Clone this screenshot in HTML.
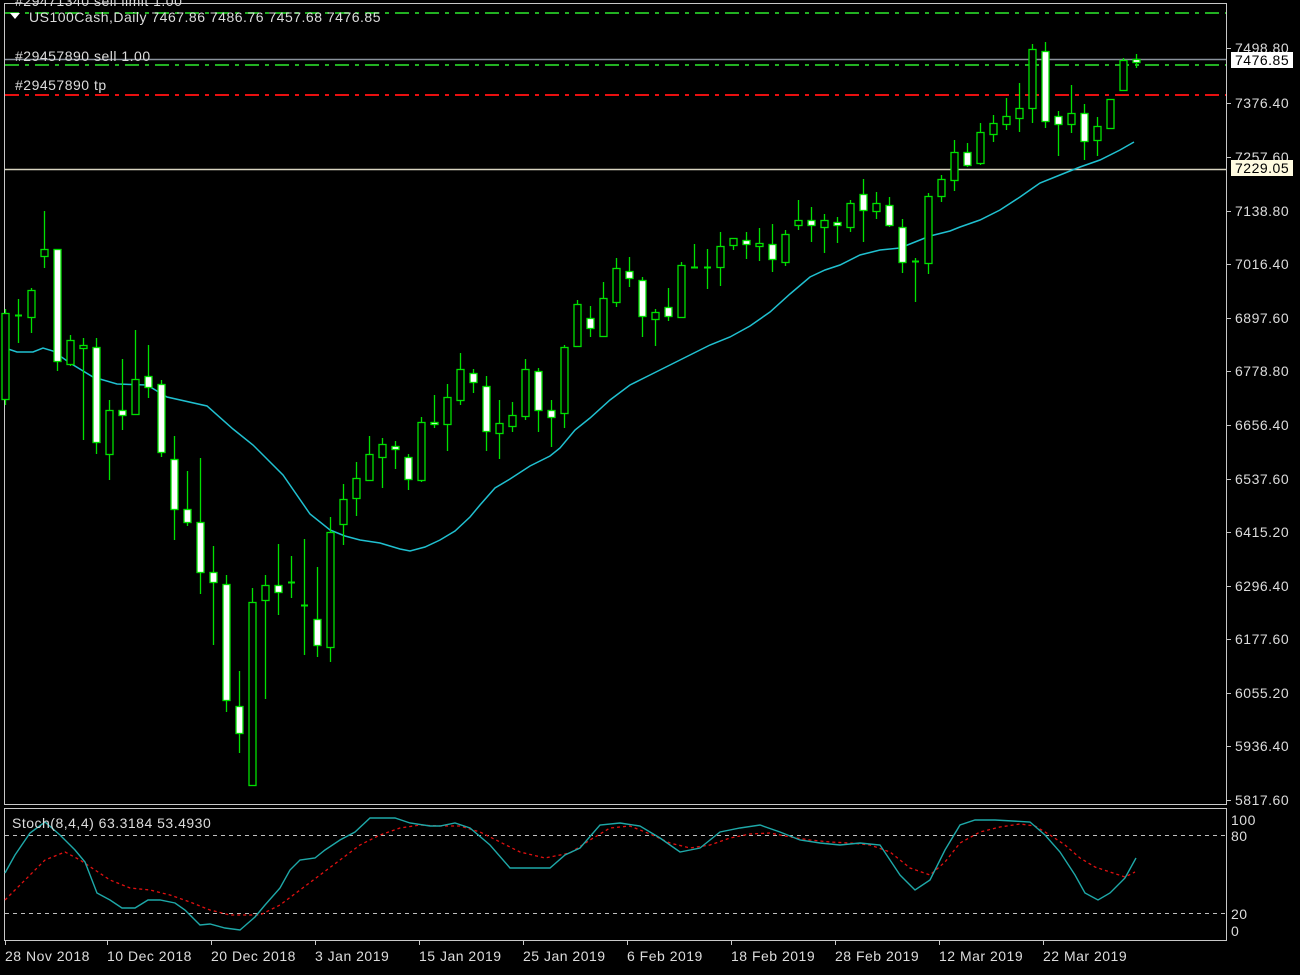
<!DOCTYPE html>
<html><head><meta charset="utf-8">
<style>
html,body{margin:0;padding:0;background:#000;width:1300px;height:975px;overflow:hidden}
svg{display:block}
text{font-family:"Liberation Sans",sans-serif;font-size:14px;letter-spacing:0.5px;fill:#dcdcdc}
</style></head><body>
<svg id="s" width="1300" height="975" viewBox="0 0 1300 975" xmlns="http://www.w3.org/2000/svg">
<rect width="1300" height="975" fill="#000"/>
<rect x="4.5" y="3.5" width="1222" height="801" fill="none" stroke="#c8c8c8" stroke-width="1"/>
<rect x="4.5" y="808.5" width="1222" height="132" fill="none" stroke="#c8c8c8" stroke-width="1"/>
<line x1="5" y1="13" x2="1226" y2="13" stroke="#22b022" stroke-width="2" stroke-dasharray="14,6,4,6"/>
<line x1="5" y1="59.5" x2="1226" y2="59.5" stroke="#8a929c" stroke-width="1.5"/>
<line x1="5" y1="65" x2="1226" y2="65" stroke="#22b022" stroke-width="2" stroke-dasharray="14,6,4,6"/>
<line x1="5" y1="95" x2="1226" y2="95" stroke="#e81010" stroke-width="2" stroke-dasharray="14,6,4,6"/>
<line x1="5" y1="169.5" x2="1226" y2="169.5" stroke="#d8d4c0" stroke-width="1.5"/>
<g id="ma"></g>
<g id="candles"></g>
<text x="15" y="6">#29471340 sell limit 1.00</text>
<polygon points="10,13 20,13 15,19" fill="#fff"/>
<text x="29" y="22">US100Cash,Daily  7467.86 7486.76 7457.68 7476.85</text>
<text x="15" y="61">#29457890 sell 1.00</text>
<text x="15" y="90">#29457890 tp</text>
<g id="axis"></g>
<rect x="1231" y="52" width="62" height="16" fill="#fff"/>
<text x="1235" y="65" style="fill:#000">7476.85</text>
<rect x="1231" y="160" width="62" height="16" fill="#fffbe0"/>
<text x="1235" y="173" style="fill:#000">7229.05</text>
<line x1="5" y1="835.5" x2="1226" y2="835.5" stroke="#c0c0c0" stroke-dasharray="4,4"/>
<line x1="5" y1="913.5" x2="1226" y2="913.5" stroke="#c0c0c0" stroke-dasharray="4,4"/>
<polyline id="sig" fill="none" stroke="#e01010" stroke-dasharray="3,3" stroke-width="1.3"/>
<polyline id="stm" fill="none" stroke="#1ea8a8" stroke-width="1.4"/>
<text x="12" y="828">Stoch(8,4,4) 63.3184 53.4930</text>
<text x="1231" y="825">100</text>
<text x="1231" y="841">80</text>
<text x="1231" y="919">20</text>
<text x="1231" y="936">0</text>
<g id="dates"></g>
</svg>
<script>
var NS="http://www.w3.org/2000/svg";
function el(p,n,a){var e=document.createElementNS(NS,n);for(var k in a)e.setAttribute(k,a[k]);p.appendChild(e);return e;}
var C=[[309,313,399,405,'B'],[299,315,315,343,'D'],[288,290,317,333,'B'],[211,249,256,268,'B'],[249,249,361,371,'R'],
[335,340,364,366,'B'],[338,345,348,440,'B'],[338,347,442,454,'R'],[400,410,454,480,'B'],[359,410,415,430,'R'],
[330,379,414,415,'B'],[345,376,387,398,'R'],[380,384,452,457,'R'],[436,459,509,540,'R'],[471,509,522,526,'R'],
[458,522,572,594,'R'],[546,572,582,645,'R'],[575,584,700,712,'R'],[671,706,733,753,'R'],[588,602,785,785,'B'],
[575,585,600,699,'B'],[544,585,592,615,'R'],[556,582,582,598,'D'],[539,605,605,655,'D'],[567,619,645,657,'R'],
[517,532,647,662,'B'],[484,499,524,545,'B'],[462,478,498,516,'B'],[436,454,480,480,'B'],[438,444,457,488,'B'],
[441,446,449,469,'R'],[454,457,479,490,'R'],[417,422,480,482,'B'],[395,422,424,428,'R'],[384,397,424,451,'B'],
[353,369,400,405,'B'],[369,373,382,393,'R'],[376,386,431,451,'R'],[400,423,433,459,'B'],[402,415,426,432,'B'],
[359,369,416,420,'B'],[368,371,410,432,'R'],[400,410,417,447,'R'],[345,347,413,428,'B'],[300,304,346,347,'B'],
[306,318,328,337,'R'],[282,298,336,337,'B'],[258,268,302,307,'B'],[257,271,278,287,'R'],[277,280,316,337,'R'],
[309,312,319,346,'B'],[288,307,316,321,'R'],[262,265,317,318,'B'],[244,267,267,268,'D'],[249,267,267,289,'D'],
[232,246,267,286,'B'],[238,238,245,250,'B'],[232,240,244,259,'R'],[228,243,246,261,'B'],[224,244,259,272,'R'],
[230,234,262,266,'B'],[200,220,225,230,'B'],[207,220,225,242,'R'],[214,220,227,253,'B'],[217,222,225,243,'R'],
[200,203,227,232,'B'],[179,194,210,242,'R'],[192,203,211,219,'B'],[197,205,225,227,'R'],[219,227,262,273,'R'],
[258,261,261,302,'D'],[193,196,263,274,'B'],[175,179,196,202,'B'],[140,152,180,191,'B'],[143,152,165,167,'R'],
[123,132,163,165,'B'],[115,123,134,142,'B'],[98,116,124,130,'B'],[83,108,118,132,'B'],[44,49,108,123,'B'],
[42,51,121,128,'R'],[111,116,124,156,'R'],[85,113,124,133,'B'],[104,113,141,160,'R'],[117,126,140,156,'B'],
[99,99,128,128,'B'],[58,60,90,90,'B'],[54,59,62,68,'R']];
var g=document.getElementById('candles'),G='#00e000';
C.forEach(function(c,i){var x=5+13*i;
 el(g,'line',{x1:x+0.5,x2:x+0.5,y1:c[0],y2:c[3],stroke:G,'stroke-width':1.3});
 if(c[4]=='D'){el(g,'line',{x1:x-3,x2:x+4,y1:c[1]+0.5,y2:c[1]+0.5,stroke:G,'stroke-width':2});}
 else el(g,'rect',{x:x-3,y:c[1]+0.5,width:7,height:Math.max(2,c[2]-c[1]),fill:c[4]=='R'?'#fff':'#000',stroke:G,'stroke-width':1.3});
});
var ma="5,348 17,352 33,352 43,348 53,351 70,363 93,377 117,384 147,385 167,397 207,406 233,429 253,445 283,475 310,514 330,530 345,536 360,540 380,543 400,549 410,551 425,547 440,540 455,531 470,517 480,505 495,488 510,479 530,466 550,456 560,448 575,430 590,418 610,400 630,385 650,375 670,365 690,355 710,345 730,337 750,326 770,312 790,294 810,277 825,270 840,265 860,255 880,250 900,248 915,242 930,236 950,231 960,227 980,220 1000,210 1020,197 1030,190 1040,183 1060,175 1080,167 1100,160 1120,150 1134,142";
el(document.getElementById('ma'),'polyline',{points:ma,fill:'none',stroke:'#20c0d0','stroke-width':1.5});
var ax=document.getElementById('axis');
[["7498.80",48],["7376.40",103],["7257.60",157],["7138.80",211],["7016.40",264],["6897.60",318],["6778.80",371],["6656.40",425],["6537.60",479],["6415.20",532],["6296.40",586],["6177.60",639],["6055.20",693],["5936.40",746],["5817.60",800]].forEach(function(p){
 el(ax,'line',{x1:1227,x2:1231,y1:p[1]+0.5,y2:p[1]+0.5,stroke:'#c8c8c8'});
 var t=el(ax,'text',{x:1235,y:p[1]+5});t.textContent=p[0];});
document.getElementById('stm').setAttribute('points',"5,873 15,855 30,833 45,822 60,835 75,850 85,862 97,893 110,900 122,908 135,908 148,900 160,900 175,903 185,910 200,925 210,924 225,928 240,930 255,917 265,905 280,888 290,870 300,860 315,858 325,850 340,840 355,832 370,818 395,818 410,823 430,826 440,826 455,823 470,828 490,845 510,868 530,868 550,868 565,855 580,848 600,825 620,823 640,826 660,838 680,852 700,848 720,832 740,828 760,825 780,832 800,840 820,843 840,845 860,843 880,845 900,875 915,890 930,880 945,850 960,825 975,820 995,820 1030,822 1045,835 1060,852 1075,875 1085,893 1098,900 1110,893 1125,878 1136,858");
document.getElementById('sig').setAttribute('points',"5,900 25,880 45,860 65,852 80,860 95,870 110,880 130,888 150,890 170,895 190,902 210,910 230,915 260,915 280,905 300,890 320,875 340,860 360,845 380,835 400,828 420,825 440,826 460,826 480,832 500,842 520,852 545,858 570,853 590,840 610,828 630,826 650,834 670,843 690,848 710,845 730,838 750,834 770,833 790,837 810,840 830,842 850,843 870,845 890,852 910,868 930,875 945,862 960,843 980,832 1000,827 1020,824 1035,826 1050,835 1065,845 1080,858 1095,867 1110,872 1125,877 1135,872");
var d=document.getElementById('dates');
[["28 Nov 2018",5],["10 Dec 2018",107],["20 Dec 2018",211],["3 Jan 2019",315],["15 Jan 2019",419],["25 Jan 2019",523],["6 Feb 2019",627],["18 Feb 2019",731],["28 Feb 2019",835],["12 Mar 2019",939],["22 Mar 2019",1043]].forEach(function(p){
 el(d,'line',{x1:p[1]+0.5,x2:p[1]+0.5,y1:941,y2:945,stroke:'#c8c8c8'});
 var t=el(d,'text',{x:p[1],y:961});t.textContent=p[0];});
</script>
</body></html>
